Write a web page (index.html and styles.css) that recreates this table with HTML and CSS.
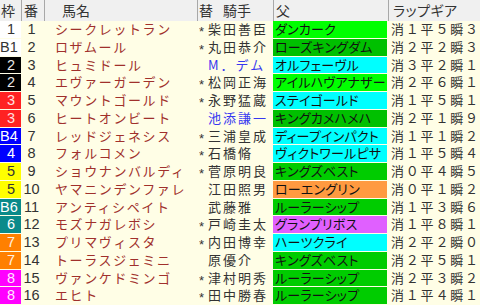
FILE: index.html
```html
<!DOCTYPE html>
<html lang="ja">
<head>
<meta charset="utf-8">
<link rel="stylesheet" href="styles.css">
</head>
<body>
<div class="table">
  <div class="head">
    <div class="h h-waku">枠</div>
    <div class="h h-num">番</div>
    <div class="h h-name">馬名</div>
    <div class="h h-jock"><span>替</span><span class="h-jock-l">騎手</span></div>
    <div class="h h-sire">父</div>
    <div class="h h-lap">ラップギア</div>
  </div>

  <div class="row"><div class="waku w1"><span>1</span></div><div class="num">1</div><div class="name">シークレットラン</div><div class="jock"><span class="mark">*</span><span>柴田善臣</span></div><div class="sire s-lime">ダンカーク</div><div class="lap">消１平５瞬３</div></div>
  <div class="row"><div class="waku w1"><span>B1</span></div><div class="num">2</div><div class="name">ロザムール</div><div class="jock"><span class="mark">*</span><span>丸田恭介</span></div><div class="sire s-dgreen">ローズキングダム</div><div class="lap">消２平２瞬３</div></div>
  <div class="row"><div class="waku w2"><span>2</span></div><div class="num">3</div><div class="name">ヒュミドール</div><div class="jock blue"><span class="mark"></span><span>M．デム</span></div><div class="sire s-cyan">オルフェーヴル</div><div class="lap">消３平２瞬１</div></div>
  <div class="row"><div class="waku w2"><span>2</span></div><div class="num">4</div><div class="name">エヴァーガーデン</div><div class="jock"><span class="mark">*</span><span>松岡正海</span></div><div class="sire s-lime">アイルハヴアナザー</div><div class="lap">消２平６瞬１</div></div>
  <div class="row"><div class="waku w3"><span>3</span></div><div class="num">5</div><div class="name">マウントゴールド</div><div class="jock"><span class="mark">*</span><span>永野猛蔵</span></div><div class="sire s-cyan">ステイゴールド</div><div class="lap">消１平５瞬１</div></div>
  <div class="row"><div class="waku w3"><span>3</span></div><div class="num">6</div><div class="name">ヒートオンビート</div><div class="jock blue"><span class="mark"></span><span>池添謙一</span></div><div class="sire s-dgreen">キングカメハメハ</div><div class="lap">消２平１瞬９</div></div>
  <div class="row"><div class="waku w4"><span>B4</span></div><div class="num">7</div><div class="name">レッドジェネシス</div><div class="jock"><span class="mark">*</span><span>三浦皇成</span></div><div class="sire s-cyan">ディープインパクト</div><div class="lap">消１平１瞬２</div></div>
  <div class="row"><div class="waku w4"><span>4</span></div><div class="num">8</div><div class="name">フォルコメン</div><div class="jock"><span class="mark">*</span><span>石橋脩</span></div><div class="sire s-cyan">ヴィクトワールピサ</div><div class="lap">消１平５瞬４</div></div>
  <div class="row"><div class="waku w5"><span>5</span></div><div class="num">9</div><div class="name">ショウナンバルディ</div><div class="jock"><span class="mark">*</span><span>菅原明良</span></div><div class="sire s-green">キングズベスト</div><div class="lap">消０平４瞬５</div></div>
  <div class="row"><div class="waku w5"><span>5</span></div><div class="num">10</div><div class="name">ヤマニンデンファレ</div><div class="jock"><span class="mark"></span><span>江田照男</span></div><div class="sire s-orange">ローエングリン</div><div class="lap">消０平１瞬２</div></div>
  <div class="row"><div class="waku w6"><span>B6</span></div><div class="num">11</div><div class="name">アンティシペイト</div><div class="jock"><span class="mark"></span><span>武藤雅</span></div><div class="sire s-green">ルーラーシップ</div><div class="lap">消１平３瞬６</div></div>
  <div class="row"><div class="waku w6"><span>6</span></div><div class="num">12</div><div class="name">モズナガレボシ</div><div class="jock"><span class="mark">*</span><span>戸崎圭太</span></div><div class="sire s-violet">グランプリボス</div><div class="lap">消１平８瞬１</div></div>
  <div class="row"><div class="waku w7"><span>7</span></div><div class="num">13</div><div class="name">プリマヴィスタ</div><div class="jock"><span class="mark">*</span><span>内田博幸</span></div><div class="sire s-cyan">ハーツクライ</div><div class="lap">消２平２瞬０</div></div>
  <div class="row"><div class="waku w7"><span>7</span></div><div class="num">14</div><div class="name">トーラスジェミニ</div><div class="jock"><span class="mark"></span><span>原優介</span></div><div class="sire s-green">キングズベスト</div><div class="lap">消２平５瞬１</div></div>
  <div class="row"><div class="waku w8"><span>8</span></div><div class="num">15</div><div class="name">ヴァンケドミンゴ</div><div class="jock"><span class="mark">*</span><span>津村明秀</span></div><div class="sire s-green">ルーラーシップ</div><div class="lap">消２平３瞬２</div></div>
  <div class="row"><div class="waku w8"><span>8</span></div><div class="num">16</div><div class="name">エヒト</div><div class="jock"><span class="mark">*</span><span>田中勝春</span></div><div class="sire s-green">ルーラーシップ</div><div class="lap">消１平４瞬１</div></div>
</div>
</body>
</html>
```

FILE: styles.css
```css
html, body {
  margin: 0;
  padding: 0;
  background: #fffee6;
}
body {
  width: 480px;
  height: 305px;
  overflow: hidden;
  font-family: "Noto Sans CJK JP", "Liberation Sans", sans-serif;
}
.table {
  width: 480px;
}
.head,
.row {
  display: grid;
  grid-template-columns: 21px 23px 153px 76px 115px 92px;
}
.head {
  height: 21px;
  background: #f0f0f0;
}
.h {
  font-size: 14px;
  line-height: 21px;
  color: #333;
  white-space: nowrap;
  box-sizing: border-box;
}
.h + .h {
  border-left: 1px solid #a8a8a8;
}
.h-waku { padding-left: 1px; }
.h-num { padding-left: 2px; }
.h-name { padding-left: 17px; }
.h-jock { padding-left: 1px; }
.h-jock-l { margin-left: 10px; }
.h-sire { padding-left: 2px; }
.h-lap {
  padding-left: 4px;
  font-feature-settings: "palt";
  letter-spacing: 0.5px;
}

.row {
  height: 17.75px;
  align-items: start;
}
.row > div {
  height: 16.75px;
  line-height: 16.75px;
  white-space: nowrap;
  box-sizing: border-box;
}
.waku {
  font-family: "Liberation Sans", sans-serif;
  font-size: 14.5px;
  text-align: right;
  padding-right: 6px;
}
.w1 { background: #ffffff; color: #333; }
.w2 { background: #000000; color: #e8e8e8; }
.w3 { background: #ff2222; color: #ffe0e0; }
.w4 { background: #0000ff; color: #ffffff; }
.w5 { background: #ffff00; color: #333; }
.w6 { background: #0a8a8a; color: #ffffff; }
.w7 { background: #ff8000; color: #fff0e0; }
.w8 { background: #ff00ff; color: #ffe8ff; }

.num {
  font-family: "Liberation Sans", sans-serif;
  font-size: 14.5px;
  color: #333;
  text-align: center;
  padding-right: 2px;
}
.name {
  font-size: 13px;
  letter-spacing: 1.6px;
  color: #a0302c;
  padding-left: 11px;
}
.jock {
  font-size: 13px;
  letter-spacing: 2px;
  color: #333;
  padding-left: 2px;
  display: flex;
  align-items: flex-start;
}
.jock.blue {
  color: #3838f0;
}
.mark {
  width: 9px;
  flex: none;
  font-family: "Liberation Sans", sans-serif;
  font-size: 13px;
  letter-spacing: 0;
  line-height: 16.75px;
  padding-top: 3px;
  box-sizing: border-box;
  height: 16.75px;
  overflow: hidden;
}
.sire {
  font-size: 13px;
  font-feature-settings: "palt";
  letter-spacing: 0.2px;
  color: #111;
  padding-left: 2px;
  margin-right: 1px;
}
.s-lime { background: #00ff00; }
.s-dgreen { background: #00c000; }
.s-green { background: #00cc00; }
.s-cyan { background: #00ffff; }
.s-orange { background: #ff9a40; }
.s-violet { background: #e060ff; }

.lap {
  font-size: 13px;
  letter-spacing: 1.8px;
  color: #333;
  padding-left: 3px;
}
```
